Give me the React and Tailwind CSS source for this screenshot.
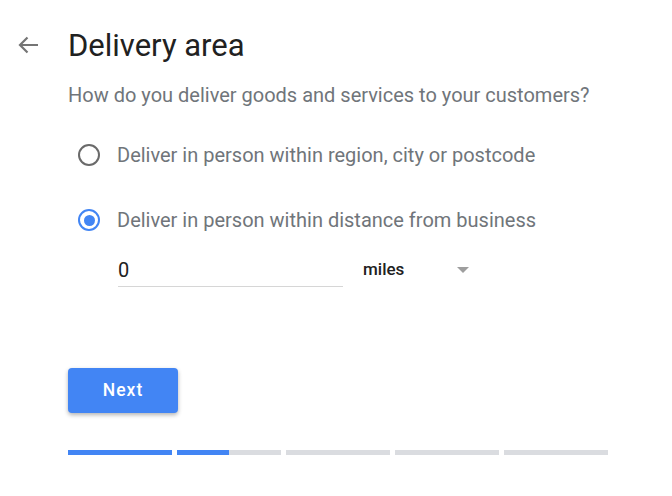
import React, { useState } from "react";

const font = { fontFamily: "Roboto, 'Noto Sans', Arial, sans-serif" };

// Radio option row
function Radio({ checked, label, onClick }) {
  return (
    <button type="button" onClick={onClick} className="flex h-[28px] items-center gap-[17px] text-left">
      <span
        className={`flex h-[22px] w-[22px] items-center justify-center rounded-full border-[2.5px] ${
          checked ? "border-[#4285f4]" : "border-[#6a6a6a]"
        }`}
      >
        {checked && <span className="h-[11px] w-[11px] rounded-full bg-[#4285f4]" />}
      </span>
      <span className="text-[20px] leading-[28px] text-[#70757a]">{label}</span>
    </button>
  );
}

const App = () => {
  const [choice, setChoice] = useState(1);
  // progress segments: fill fraction
  const steps = [1, 0.5, 0, 0, 0];

  return (
    <div className="min-h-screen bg-white pt-[28px]" style={font}>
      <div className="flex">
        {/* Back arrow */}
        <div className="w-[68px] pl-[17px] pt-[7px]">
          <svg width="22" height="20" viewBox="0 0 22 20" fill="none" stroke="#757575" strokeWidth="2.2">
            <path d="M21 10H3.5M10.5 2.5L3 10l7.5 7.5" />
          </svg>
        </div>

        <div className="flex-1">
          <h1 className="text-[31px] leading-[36px] text-[#212121]">Delivery area</h1>
          <p className="mt-[17px] text-[20px] leading-[28px] text-[#70757a]">
            How do you deliver goods and services to your customers?
          </p>

          <div className="mt-[32px] flex flex-col gap-[37px] pl-[10px]">
            <Radio
              checked={choice === 0}
              onClick={() => setChoice(0)}
              label="Deliver in person within region, city or postcode"
            />
            <Radio
              checked={choice === 1}
              onClick={() => setChoice(1)}
              label="Deliver in person within distance from business"
            />
          </div>

          <div className="mt-[22px] flex items-start pl-[50px]">
            <div className="w-[225px] border-b border-[#d6d6d6] pb-[2px] text-[20px] leading-[28px] text-[#212121]">
              0
            </div>
            <div className="ml-[20px] flex h-[28px] w-[106px] items-center justify-between">
              <span className="text-[17px] font-medium text-[#212121]">miles</span>
              <span className="h-0 w-0 border-x-[6px] border-t-[6px] border-x-transparent border-t-[#9e9e9e]" />
            </div>
          </div>

          <button
            type="button"
            className="mt-[81px] h-[45px] w-[110px] rounded-[4px] bg-[#4285f4] text-[17.5px] font-medium tracking-[0.06em] text-white shadow-[0_2px_4px_rgba(0,0,0,0.3)]"
          >
            Next
          </button>

          <div className="mt-[37px] flex gap-[5px]">
            {steps.map((f, i) => (
              <div key={i} className="h-[5px] w-[104px] bg-[#dadce0]">
                <div className="h-full bg-[#4285f4]" style={{ width: `${f * 100}%` }} />
              </div>
            ))}
          </div>
        </div>
      </div>
    </div>
  );
};

export default App;
